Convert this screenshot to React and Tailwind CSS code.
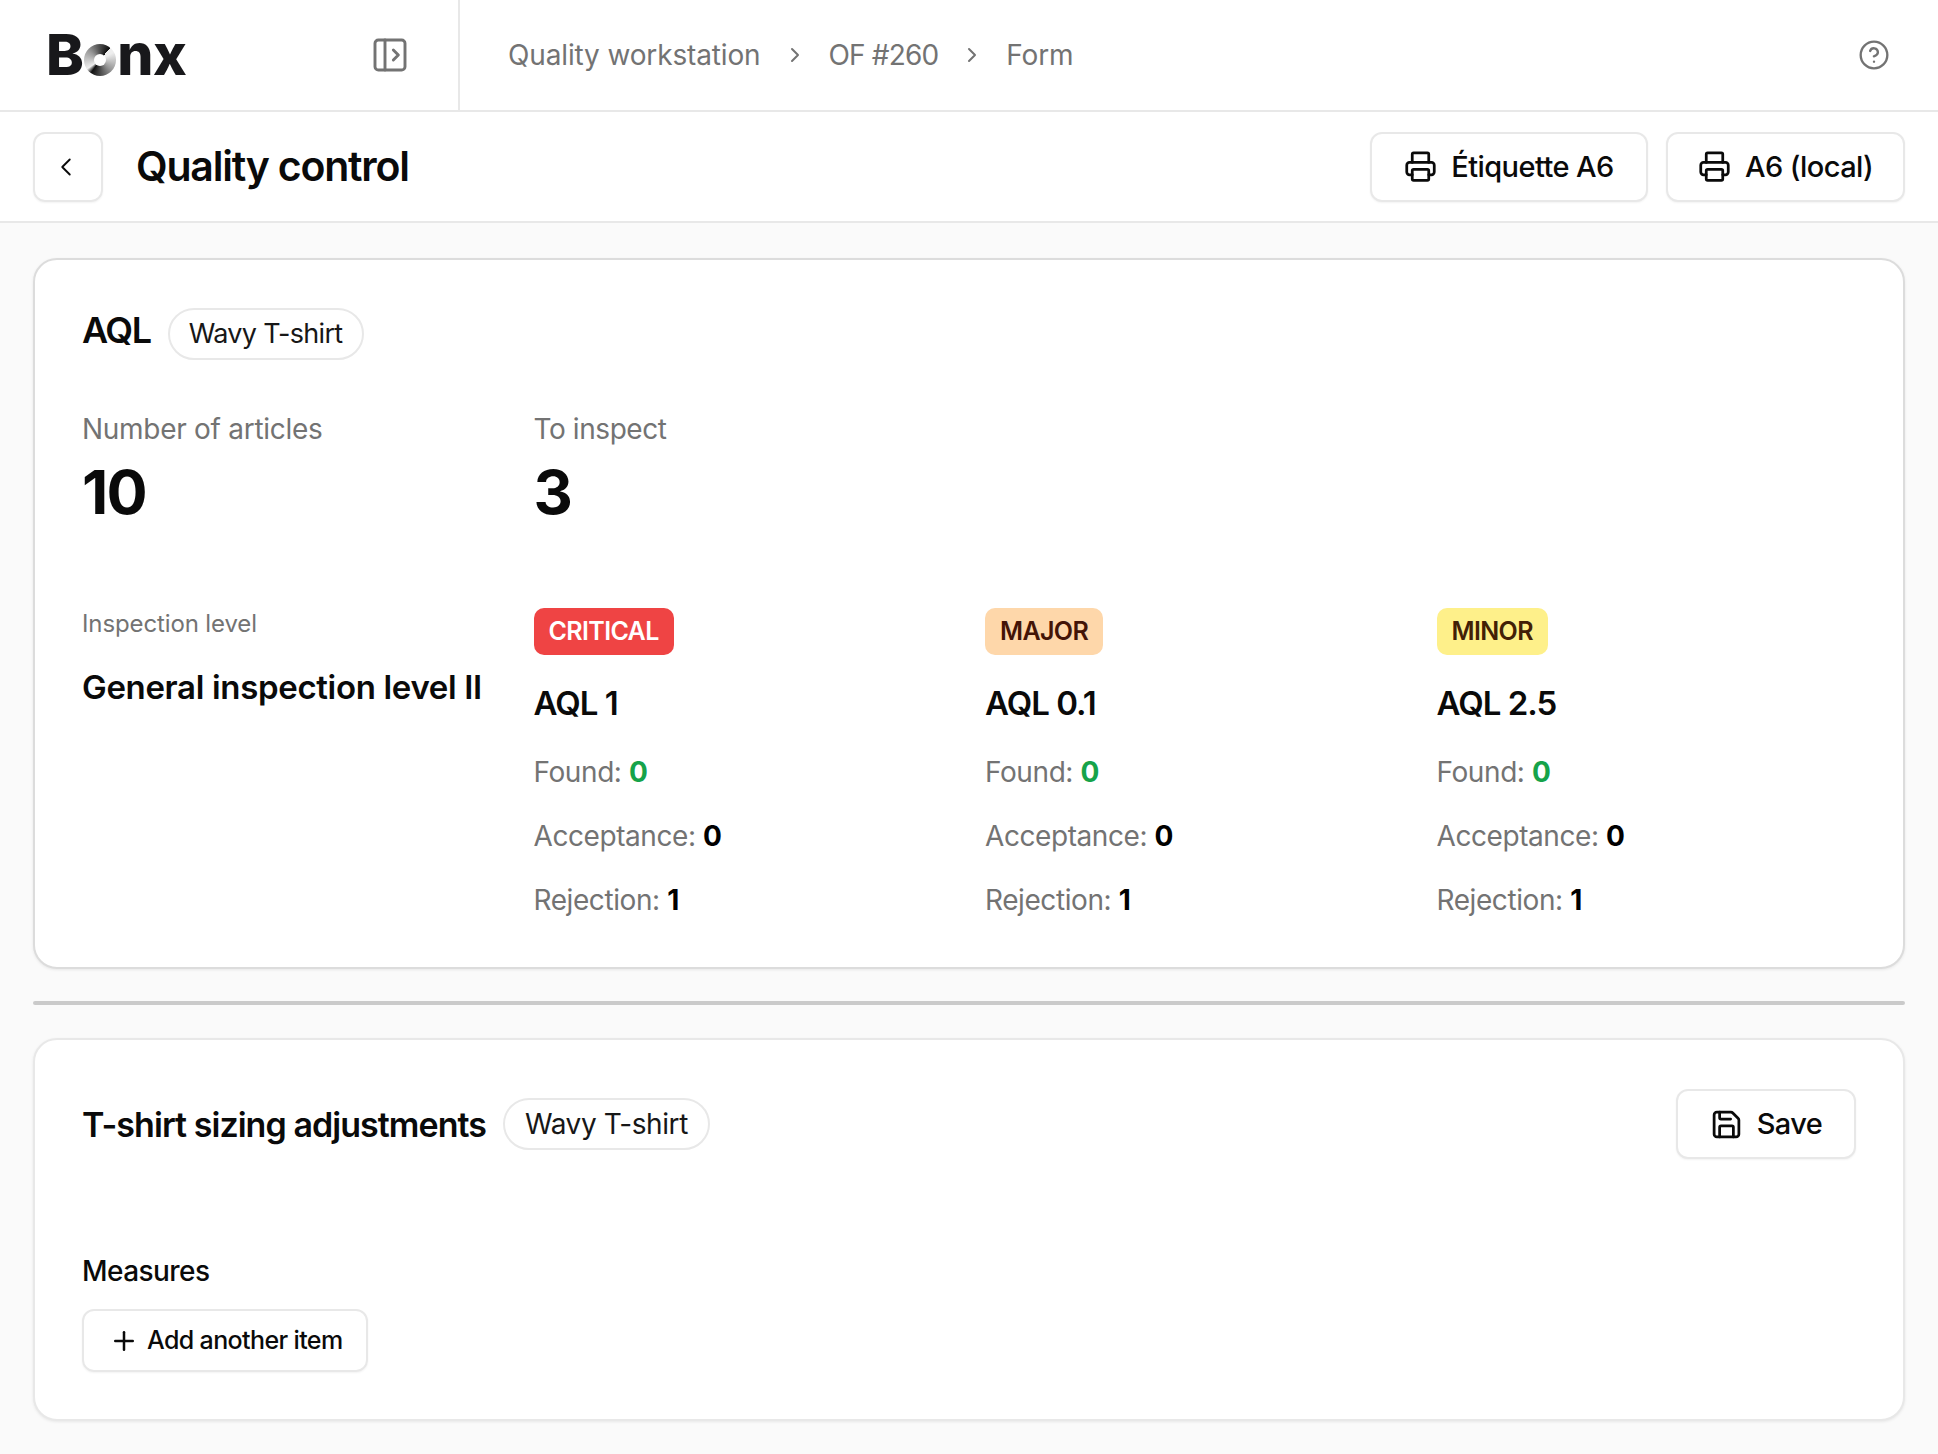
import { ChevronLeft, ChevronRight, CircleHelp, PanelLeftOpen, Plus, Printer, Save } from 'lucide-react';

const FONT = { fontFamily: 'Inter, sans-serif' };

const OutlineBtn = ({ icon: Icon, label, className = '' }) => (
  <button className={`flex items-center justify-center gap-[14px] h-[70px] rounded-[12px] border-2 border-[#e8e8e8] bg-white shadow-[0_1px_2px_rgba(0,0,0,0.05)] text-[29px] font-medium tracking-[-0.02em] text-[#0a0a0a] ${className}`}>
    <Icon className="w-[33px] h-[33px]" strokeWidth={2} />
    {label}
  </button>
);

const Pill = ({ children, className = '' }) => (
  <span className={`inline-flex items-center h-[52px] rounded-full border-2 border-[#e8e8e8] text-[#171717] ${className}`}>
    {children}
  </span>
);

const SEVERITIES = [
  { tag: 'CRITICAL', cls: 'bg-[#ef4444] text-white', aql: 'AQL 1' },
  { tag: 'MAJOR', cls: 'bg-[#fed7aa] text-[#431407]', aql: 'AQL 0.1' },
  { tag: 'MINOR', cls: 'bg-[#fef08a] text-[#422006]', aql: 'AQL 2.5' },
];

const Stat = ({ label, value, valueCls = 'text-black' }) => (
  <p className="h-[64px] flex items-center text-[28px] tracking-[-0.015em] text-[#737373]">
    {label}:&nbsp;<span className={`font-bold ${valueCls}`}>{value}</span>
  </p>
);

const App = () => (
  <div className="min-h-[1454px] bg-[#fafafa] text-[#0a0a0a]" style={FONT}>
    <header className="flex h-[112px] bg-white border-b-2 border-[#e8e8e8]">
      <div className="w-[460px] shrink-0 flex items-center justify-between pl-[46px] pr-[48px] border-r-2 border-[#e8e8e8]">
        <div className="flex items-end h-[42px] text-[57px] leading-[42px] font-extrabold tracking-[-0.01em] text-[#18181b]">
          <span>B</span>
          <span className="inline-block w-[32px] h-[32px] ml-[1px] mr-[1px] rounded-full bg-[conic-gradient(from_40deg,#eeeeee_20deg,#999999_90deg,#111111_175deg,#eeeeee_195deg,#999999_270deg,#111111_358deg)] p-[10px]">
            <span className="block w-full h-full rounded-full bg-white" />
          </span>
          <span>nx</span>
        </div>
        <PanelLeftOpen className="w-[40px] h-[40px] text-[#737373]" strokeWidth={1.75} />
      </div>
      <nav className="flex-1 flex items-center pl-[48px] pr-[48px] text-[28px] tracking-[-0.005em] text-[#737373]">
        <span>Quality workstation</span>
        <ChevronRight className="w-[24px] h-[24px] mx-[22px]" />
        <span className="tracking-[-0.03em]">OF #260</span>
        <ChevronRight className="w-[24px] h-[24px] mx-[22px]" />
        <span>Form</span>
        <CircleHelp className="w-[32px] h-[32px] ml-auto" strokeWidth={1.75} />
      </nav>
    </header>

    <div className="flex items-center h-[111px] px-[33px] bg-white border-b-2 border-[#e8e8e8]">
      <button className="flex items-center justify-center w-[70px] h-[70px] rounded-[12px] border-2 border-[#e8e8e8] shadow-[0_1px_2px_rgba(0,0,0,0.05)]">
        <ChevronLeft className="w-[30px] h-[30px] -ml-[4px]" strokeWidth={1.5} />
      </button>
      <h1 className="ml-[33px] text-[41px] font-semibold tracking-[-0.03em] text-[#0a0a0a]">Quality control</h1>
      <div className="ml-auto flex gap-[18px]">
        <OutlineBtn icon={Printer} label="Étiquette A6" className="w-[278px]" />
        <OutlineBtn icon={Printer} label="A6 (local)" className="w-[239px]" />
      </div>
    </div>

    <main className="px-[33px] pt-[35px]">
      <section className="h-[711px] rounded-[24px] border-2 border-[#dcdcdc] bg-white shadow-[0_1px_3px_rgba(0,0,0,0.08)] px-[47px] pt-[48px]">
        <div className="flex items-center gap-[17px]">
          <h2 className="text-[36px] font-semibold tracking-[-0.04em] -mt-[9px]">AQL</h2>
          <Pill className="px-[19px] text-[27px] tracking-[-0.025em]">Wavy T-shirt</Pill>
        </div>

        <div className="grid grid-cols-4 gap-x-8 mt-[49px]">
          <div>
            <p className="text-[28px] leading-[40px] tracking-[-0.01em] text-[#737373]">Number of articles</p>
            <p className="text-[61px] leading-[80px] font-bold tracking-[-0.03em] mt-[3px]">10</p>
          </div>
          <div>
            <p className="text-[28px] leading-[40px] tracking-[-0.015em] text-[#737373]">To inspect</p>
            <p className="text-[61px] leading-[80px] font-bold tracking-[-0.03em] mt-[3px]">3</p>
          </div>
        </div>

        <div className="grid grid-cols-4 gap-x-8 mt-[76px]">
          <div>
            <p className="text-[24px] leading-[32px] tracking-[-0.005em] text-[#737373]">Inspection level</p>
            <p className="mt-[31px] text-[33px] leading-[32px] font-semibold tracking-[-0.01em]">General inspection level II</p>
          </div>
          {SEVERITIES.map(({ tag, cls, aql }) => (
            <div key={tag}>
              <span className={`inline-flex items-center h-[47px] px-[15px] rounded-[10px] text-[25px] font-semibold tracking-[-0.025em] ${cls}`}>{tag}</span>
              <p className="mt-[28px] text-[33px] leading-[40px] font-semibold tracking-[-0.03em]">{aql}</p>
              <div className="mt-[17px]">
                <Stat label="Found" value="0" valueCls="text-[#16a34a]" />
                <Stat label="Acceptance" value="0" />
                <Stat label="Rejection" value="1" />
              </div>
            </div>
          ))}
        </div>
      </section>

      <hr className="mt-[32px] mb-[33px] border-0 h-[4px] rounded-full bg-[#cacaca]" />

      <section className="h-[383px] rounded-[24px] border-2 border-[#e8e8e8] bg-white shadow-[0_1px_3px_rgba(0,0,0,0.08)] px-[47px] pt-[58px]">
        <div className="flex items-center gap-[17px]">
          <h2 className="text-[34px] font-semibold tracking-[-0.028em]">T-shirt sizing adjustments</h2>
          <Pill className="px-[20px] text-[28px] tracking-[-0.015em]">Wavy T-shirt</Pill>
          <OutlineBtn icon={Save} label="Save" className="ml-auto w-[180px] -my-[9px]" />
        </div>
        <h3 className="mt-[103px] text-[28px] leading-[36px] font-medium tracking-[-0.02em]">Measures</h3>
        <button className="mt-[20px] flex items-center gap-[8px] w-[286px] h-[63px] pl-[25px] rounded-[12px] border-2 border-[#e8e8e8] shadow-[0_1px_2px_rgba(0,0,0,0.05)] text-[25px] font-medium tracking-[-0.025em]">
          <Plus className="w-[30px] h-[30px]" strokeWidth={2} />
          Add another item
        </button>
      </section>
    </main>
  </div>
);

export default App;
